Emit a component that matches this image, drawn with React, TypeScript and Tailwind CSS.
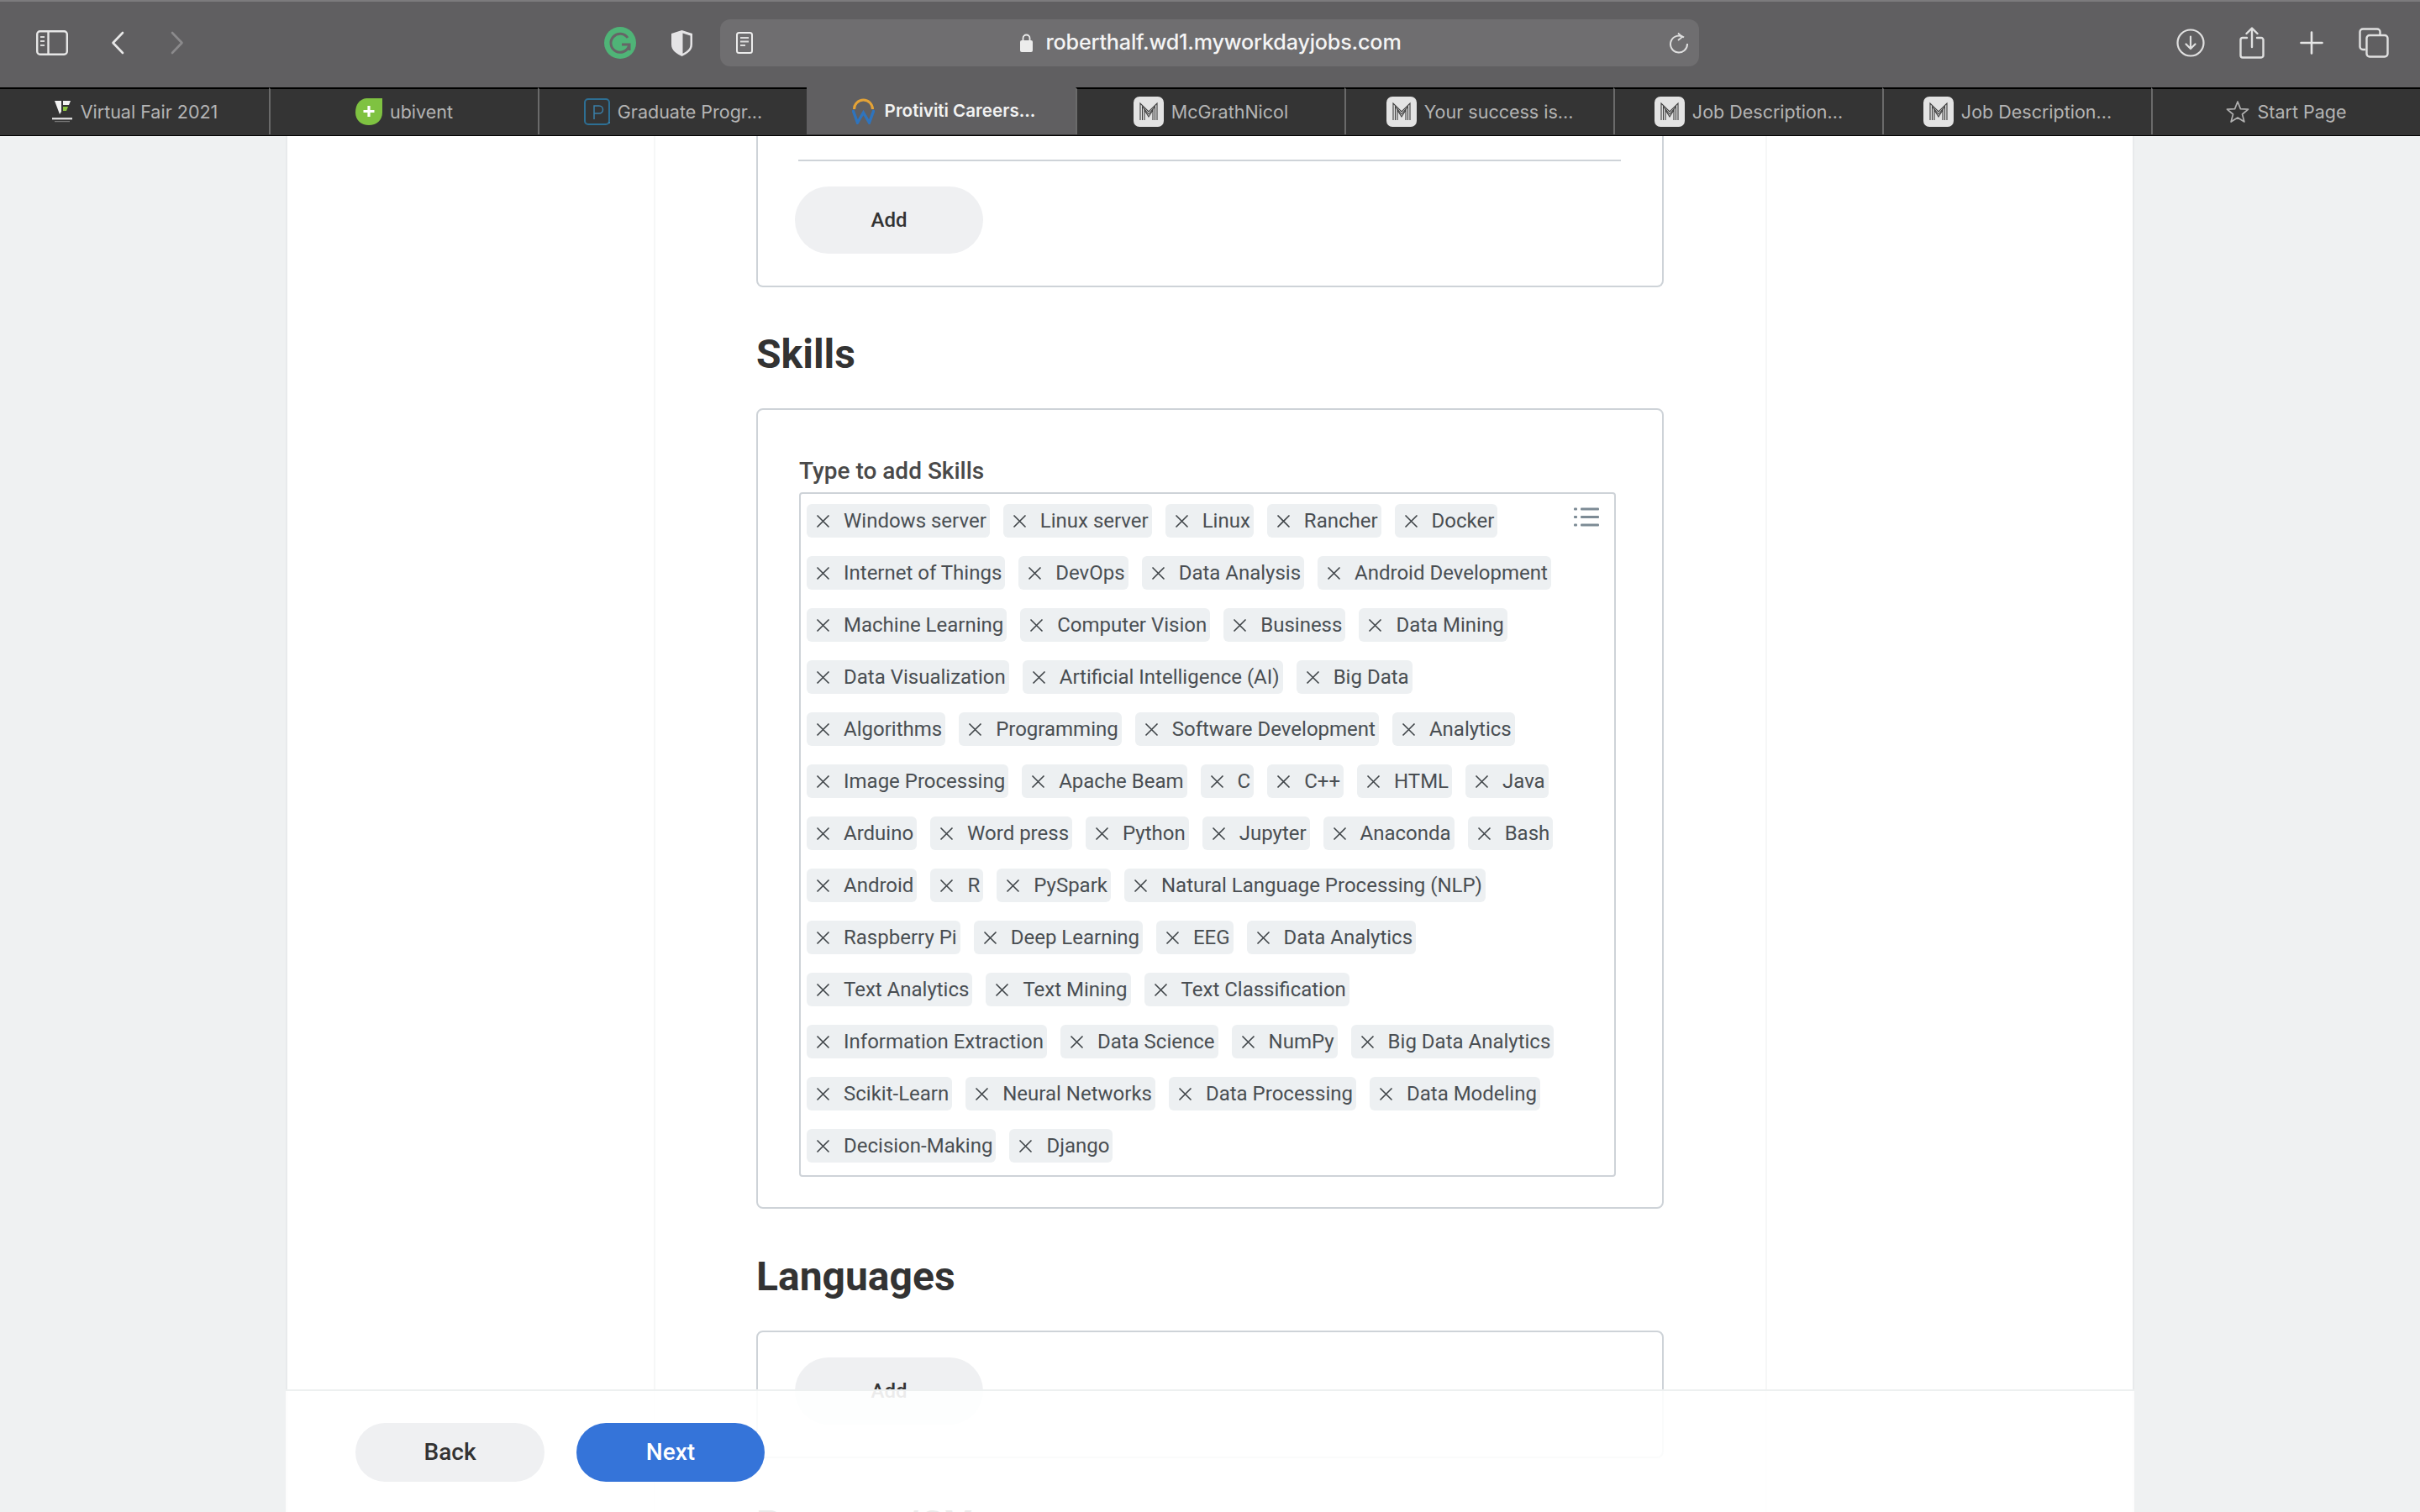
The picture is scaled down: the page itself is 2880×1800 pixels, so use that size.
import React from "react";

const SKILL_ROWS: string[][] = [
  ["Windows server", "Linux server", "Linux", "Rancher", "Docker"],
  ["Internet of Things", "DevOps", "Data Analysis", "Android Development"],
  ["Machine Learning", "Computer Vision", "Business", "Data Mining"],
  ["Data Visualization", "Artificial Intelligence (AI)", "Big Data"],
  ["Algorithms", "Programming", "Software Development", "Analytics"],
  ["Image Processing", "Apache Beam", "C", "C++", "HTML", "Java"],
  ["Arduino", "Word press", "Python", "Jupyter", "Anaconda", "Bash"],
  ["Android", "R", "PySpark", "Natural Language Processing (NLP)"],
  ["Raspberry Pi", "Deep Learning", "EEG", "Data Analytics"],
  ["Text Analytics", "Text Mining", "Text Classification"],
  ["Information Extraction", "Data Science", "NumPy", "Big Data Analytics"],
  ["Scikit-Learn", "Neural Networks", "Data Processing", "Data Modeling"],
  ["Decision-Making", "Django"],
];

const MLogo: React.FC = () => (
  <svg width="36" height="36" viewBox="0 0 36 36" className="shrink-0">
    <rect width="36" height="36" rx="7" fill="#e3e3e3" />
    <g fill="none" stroke="#3d3d3d" strokeWidth="1.1">
      <path d="M8 28V8l10 10 10-10v20" />
      <path d="M10.5 28V12l7.5 9 7.5-9v16" />
      <path d="M13 28V16l5 8 5-8v12" />
    </g>
  </svg>
);

const VirtualFairLogo: React.FC = () => (
  <svg width="26" height="28" viewBox="0 0 26 28" className="shrink-0">
    <path d="M4 1h8v13l-2 3z" fill="#f2f2f2" />
    <path d="M14 1h9l-2 5h-7z" fill="#f2f2f2" />
    <path d="M14 8h6l-2 5h-4z" fill="#8cc63f" />
    <rect x="1" y="21" width="24" height="2.4" fill="#d8d8d8" />
    <rect x="4" y="25" width="18" height="1.2" fill="#777" />
  </svg>
);

const UbiventLogo: React.FC = () => (
  <svg width="32" height="32" viewBox="0 0 32 32" className="shrink-0">
    <path d="M13 0h19v17c0 9-7 15-16 15C7 32 0 26 0 17 0 7 5 1 13 0z" fill="#7fc241" />
    <path d="M16 9v13M9.5 15.5h13" stroke="#fff" strokeWidth="3.2" />
  </svg>
);

const ProgramLogo: React.FC = () => (
  <svg width="31" height="32" viewBox="0 0 31 32" className="shrink-0">
    <rect x="1" y="1" width="29" height="30" rx="4" fill="none" stroke="#2d6f94" strokeWidth="2" />
    <path d="M12 25V9h6a4.5 4.5 0 0 1 0 9h-6" fill="none" stroke="#3a7fa8" strokeWidth="1.5" />
    <rect x="29" y="28" width="2" height="2" fill="#3a7fa8" />
  </svg>
);

const WorkdayLogo: React.FC = () => (
  <svg width="27" height="32" viewBox="0 0 27 32" className="shrink-0">
    <path d="M2.5 14a11 11 0 0 1 22 0" fill="none" stroke="#e5a336" strokeWidth="3" />
    <path d="M1 15l5.5 15 7-12 7 12L26 15" fill="none" stroke="#2f74bd" strokeWidth="3.4" />
  </svg>
);

const StarIcon: React.FC = () => (
  <svg width="28" height="28" viewBox="0 0 28 28" className="shrink-0">
    <path d="M14 2l3.4 8.6 9.2.5-7.1 5.9 2.4 9L14 21l-7.9 5 2.4-9-7.1-5.9 9.2-.5z" fill="none" stroke="#b0b0b0" strokeWidth="1.7" strokeLinejoin="round" />
  </svg>
);

const TABS: { title: string; icon: React.ReactNode; active?: boolean }[] = [
  { title: "Virtual Fair 2021", icon: <VirtualFairLogo /> },
  { title: "ubivent", icon: <UbiventLogo /> },
  { title: "Graduate Progr...", icon: <ProgramLogo /> },
  { title: "Protiviti Careers...", icon: <WorkdayLogo />, active: true },
  { title: "McGrathNicol", icon: <MLogo /> },
  { title: "Your success is...", icon: <MLogo /> },
  { title: "Job Description...", icon: <MLogo /> },
  { title: "Job Description...", icon: <MLogo /> },
  { title: "Start Page", icon: <StarIcon /> },
];

const Toolbar: React.FC = () => (
  <div className="flex h-[104px] items-center border-t-2 border-[#7c7b7d] bg-[#605f61] pl-[43px] pb-[4px]">
    {/* sidebar toggle */}
    <svg width="38" height="30" viewBox="0 0 38 30" fill="none" stroke="#e6e6e6" strokeWidth="2.4">
      <rect x="1.2" y="1.2" width="35.6" height="27.6" rx="3.5" />
      <path d="M14.5 1.2v27.6" />
      <path d="M5 8h5M5 13h5M5 18h5" strokeWidth="2" stroke="#d8d8d8" />
    </svg>
    <svg width="16" height="28" viewBox="0 0 16 28" fill="none" stroke="#e8e8e8" strokeWidth="2.6" strokeLinecap="round" strokeLinejoin="round" className="ml-[51px]">
      <path d="M14 2L2.5 14 14 26" />
    </svg>
    <svg width="16" height="28" viewBox="0 0 16 28" fill="none" stroke="#8b8a8c" strokeWidth="2.6" strokeLinecap="round" strokeLinejoin="round" className="ml-[55px]">
      <path d="M2 2l11.5 12L2 26" />
    </svg>
    {/* grammarly */}
    <svg width="38" height="38" viewBox="0 0 38 38" className="ml-[500px]">
      <circle cx="19" cy="19" r="19" fill="#4fb477" />
      <path d="M28 13a11 11 0 1 0 1.5 9.5" fill="none" stroke="#666567" strokeWidth="3" />
      <path d="M21 21h9v7" fill="none" stroke="#666567" strokeWidth="3" />
    </svg>
    <svg width="27" height="33" viewBox="0 0 27 33" className="ml-[41px]">
      <path d="M13.5 1L26 5v13c0 7-6 11-12.5 14C7 29 1 25 1 18V5z" fill="#e5e4e6" />
      <path d="M14.5 4.5l9 3V18c0 5-4 8-9 10.8z" fill="#666567" />
    </svg>
    {/* address bar */}
    <div className="ml-[32px] flex h-[56px] w-[1165px] items-center rounded-[12px] bg-[#6f6e70] pl-[19px] pr-[12px]">
      <svg width="20" height="26" viewBox="0 0 20 26" fill="none" stroke="#ececec" strokeWidth="2">
        <rect x="1" y="1" width="18" height="24" rx="2.5" />
        <path d="M5 7h10M5 11.5h10M5 16h6" stroke="#dcdcdc" />
      </svg>
      <div className="flex flex-1 items-center justify-center gap-[15px] pr-[4px]">
        <svg width="15" height="23" viewBox="0 0 15 23">
          <path d="M3.5 10V6.5a4 4 0 0 1 8 0V10" fill="none" stroke="#ececec" strokeWidth="1.8" />
          <rect y="9" width="15" height="14" rx="2" fill="#ececec" />
        </svg>
        <span className="font-['Inter',sans-serif] text-[25.2px] leading-none font-medium tracking-[-0.2px] text-[#f4f4f4]">
          roberthalf.wd1.myworkdayjobs.com
        </span>
      </div>
      <svg width="24" height="26" viewBox="0 0 24 26" fill="none" stroke="#dedede" strokeWidth="2" className="-ml-[4px]">
        <path d="M18 6.5A10 10 0 1 0 22 14" />
        <path d="M11 1.5l5 4.5-5 4" strokeWidth="1.8" />
      </svg>
    </div>
    <svg width="34" height="34" viewBox="0 0 34 34" fill="none" stroke="#e0e0e0" strokeWidth="2.2" strokeLinecap="round" strokeLinejoin="round" className="ml-[568px]">
      <circle cx="17" cy="17" r="15.5" />
      <path d="M17 9.5v14M11.5 18.5l5.5 5.5 5.5-5.5" />
    </svg>
    <svg width="30" height="38" viewBox="0 0 30 38" fill="none" stroke="#e0e0e0" strokeWidth="2.4" strokeLinecap="round" strokeLinejoin="round" className="ml-[41px]">
      <path d="M9 13H4a2.5 2.5 0 0 0-2.5 2.5v18.500A2.500 2.500 0 0 0 4 36.500h22a2.500 2.500 0 0 0 2.500-2.500V15.500A2.500 2.500 0 0 0 26 13h-5" />
      <path d="M15 24V2M8.500 8L15 1.500 21.500 8" />
    </svg>
    <svg width="28" height="28" viewBox="0 0 28 28" stroke="#e6e6e6" strokeWidth="2.6" strokeLinecap="round" className="ml-[42px]">
      <path d="M14 1.500v25M1.500 14h25" />
    </svg>
    <svg width="36" height="36" viewBox="0 0 36 36" fill="none" stroke="#e0e0e0" strokeWidth="2.4" strokeLinejoin="round" className="ml-[42px]">
      <path d="M8 26H5a3.500 3.500 0 0 1-3.500-3.500V5A3.500 3.500 0 0 1 5 1.500h17A3.500 3.500 0 0 1 25.500 5v3" />
      <rect x="9.500" y="9" width="25" height="25.500" rx="3.500" />
    </svg>
  </div>
);

const TabBar: React.FC = () => (
  <div className="flex h-[57px] bg-[#343434]">
    {TABS.map((t, i) => (
      <div
        key={i}
        className={
          t.active
            ? "flex h-[56px] w-[320px] items-center justify-center gap-[12px] bg-[#605f61] pl-[6px]"
            : "flex h-[56px] w-[320px] items-center justify-center gap-[9px] border-t-2 border-l-2 border-t-black border-l-[#6a6a6a] bg-[#343434] first:border-l-0"
        }
      >
        {t.icon}
        <span
          className={
            t.active
              ? "font-['Inter',sans-serif] text-[20.6px] font-semibold text-[#f2f2f2]"
              : "font-['Inter',sans-serif] text-[21.5px] text-[#b4b4b4]"
          }
        >
          {t.title}
        </span>
      </div>
    ))}
  </div>
);

const Chip: React.FC<{ label: string }> = ({ label }) => (
  <div className="flex h-[40px] items-center gap-[16px] rounded-[6px] bg-[#edf0f2] pl-[11px] pr-[4px]">
    <svg width="17" height="17" viewBox="0 0 17 17" stroke="#3f4448" strokeWidth="1.6" className="shrink-0">
      <path d="M1.500 1.500l14 14M15.500 1.500l-14 14" />
    </svg>
    <span className="text-[24px] leading-none whitespace-nowrap text-[#494e52]">{label}</span>
  </div>
);

const AddButton: React.FC = () => (
  <button className="-ml-[4px] block h-[80px] w-[224px] rounded-[40px] bg-[#eff0f2] text-[24px] font-medium text-[#333]">
    Add
  </button>
);

const Heading: React.FC<{ children: React.ReactNode; className: string }> = ({ children, className }) => (
  <h2 className={`h-[56px] text-[48px] leading-[56px] font-bold text-[#333] ${className}`}>{children}</h2>
);

const FormColumn: React.FC = () => (
  <div className="ml-[120px] w-[1080px]">
    {/* bottom of the previous section, scrolled off at the top */}
    <div className="h-[180px] rounded-b-[8px] border-x-2 border-b-2 border-[#ced3d8] pl-[48px] pr-[49px] pt-[28px]">
      <div className="h-[2px] bg-[#ced3d8]" />
      <div className="pt-[30px]">
        <AddButton />
      </div>
    </div>

    <Heading className="mt-[52px] mb-[36px]">Skills</Heading>
    <div className="rounded-[8px] border-2 border-[#ced3d8] pt-[55px] pr-[55px] pb-[36px] pl-[49px]">
      <div className="mb-[7px] text-[28px] leading-[36px] font-medium text-[#494949]">Type to add Skills</div>
      <div className="relative flex flex-col gap-[22px] rounded-[4px] border-2 border-[#ced3d8] pt-[12px] pb-[15px] pl-[7px]">
        {SKILL_ROWS.map((row, i) => (
          <div key={i} className="flex gap-[16px]">
            {row.map((s) => (
              <Chip key={s} label={s} />
            ))}
          </div>
        ))}
        <svg width="30" height="23" viewBox="0 0 30 23" fill="#7d8b95" className="absolute top-[16px] right-[18px]">
          <rect x="0" y="0.500" width="4" height="3" rx="1" />
          <rect x="8" y="0.500" width="22" height="3" rx="1" />
          <rect x="0" y="10" width="4" height="3" rx="1" />
          <rect x="8" y="10" width="22" height="3" rx="1" />
          <rect x="0" y="19.500" width="4" height="3" rx="1" />
          <rect x="8" y="19.500" width="22" height="3" rx="1" />
        </svg>
      </div>
    </div>

    <Heading className="mt-[53px] mb-[36px]">Languages</Heading>
    <div className="h-[152px] rounded-[8px] border-2 border-[#ced3d8] pt-[30px] pl-[48px]">
      <AddButton />
    </div>

    <Heading className="mt-[52px]">Resume/CV</Heading>
  </div>
);

export default function App() {
  return (
    <div className="flex h-screen flex-col overflow-hidden bg-[#eff1f2] font-['Roboto',sans-serif]">
      <Toolbar />
      <TabBar />
      <main className="relative min-h-0 flex-1 overflow-hidden border-t border-black pl-[340px]">
        <div className="h-full w-[2200px] border-x-2 border-[#e8eaec] bg-white">
          <div className="ml-[436px] h-full w-[1325px] border-x-2 border-[#f6f7f7]">
            <FormColumn />
          </div>
        </div>
        {/* sticky footer, translucent over the scrolling form */}
        <div className="absolute bottom-0 left-[340px] flex h-[146px] w-[2200px] items-start gap-[38px] border-t-2 border-[#edf0f0] bg-white/90 pt-[38px] pl-[83px]">
          <button className="h-[70px] w-[225px] rounded-[35px] bg-[#eff0f2] text-[28px] font-medium text-[#333]">Back</button>
          <button className="h-[70px] w-[224px] rounded-[35px] bg-[#3574d9] text-[28px] font-medium text-white">Next</button>
        </div>
      </main>
    </div>
  );
}
